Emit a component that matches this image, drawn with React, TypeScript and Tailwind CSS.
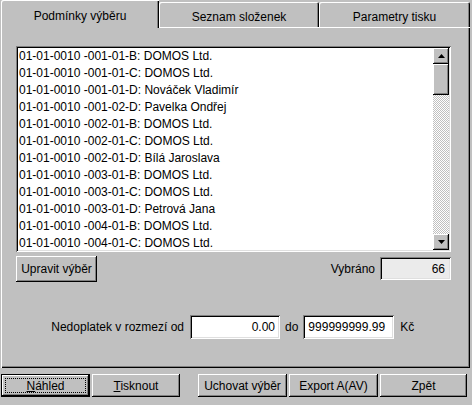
import React from "react";

const rows = [
  "01-01-0010 -001-01-B: DOMOS Ltd.",
  "01-01-0010 -001-01-C: DOMOS Ltd.",
  "01-01-0010 -001-01-D: Nováček Vladimír",
  "01-01-0010 -001-02-D: Pavelka Ondřej",
  "01-01-0010 -002-01-B: DOMOS Ltd.",
  "01-01-0010 -002-01-C: DOMOS Ltd.",
  "01-01-0010 -002-01-D: Bílá Jaroslava",
  "01-01-0010 -003-01-B: DOMOS Ltd.",
  "01-01-0010 -003-01-C: DOMOS Ltd.",
  "01-01-0010 -003-01-D: Petrová Jana",
  "01-01-0010 -004-01-B: DOMOS Ltd.",
  "01-01-0010 -004-01-C: DOMOS Ltd.",
];

// classic 3D edges
const raised = "bg-[#c0c0c0] shadow-[inset_-1px_-1px_#000,inset_1px_1px_#fff,inset_-2px_-2px_#808080]";
const sunken = "shadow-[inset_1px_1px_#808080,inset_-1px_-1px_#fff,inset_2px_2px_#000,inset_-2px_-2px_#dfdfdf]";

const Arrow = ({ down }: { down?: boolean }) => (
  <svg width="7" height="4" viewBox="0 0 7 4">
    <polygon points={down ? "0,0 7,0 3.5,4" : "3.5,0 7,4 0,4"} fill="#000" />
  </svg>
);

const Btn = ({ children, w, def }: { children: React.ReactNode; w: string; def?: boolean }) => (
  <div className={`${w} h-[23px] ${def ? "border border-black" : ""} ${raised} flex items-stretch justify-center`}>
    {def ? (
      <div className="flex-1 m-[3px] border border-dotted border-black flex items-center justify-center">{children}</div>
    ) : (
      <div className="flex items-center">{children}</div>
    )}
  </div>
);

export default function App() {
  return (
    <div className="w-[472px] h-[405px] bg-[#c0c0c0] text-black text-[12px] font-['Liberation_Sans',Arial,sans-serif] overflow-hidden">
      <div className="ml-px w-[469px]">
        {/* tabs */}
        <div className="flex items-end h-[27px]">
          <div className="relative z-10 w-[158px] h-[28px] -mb-px bg-[#c0c0c0] rounded-tl-[2px] shadow-[inset_1px_1px_#fff,inset_-1px_0_#000,inset_-2px_0_#808080] flex justify-center pt-[7px]">
            Podmínky výběru
          </div>
          <div className="w-[160px] h-[25px] rounded-t-[2px] shadow-[inset_1px_1px_#fff,inset_-1px_0_#000,inset_-2px_0_#808080] flex justify-center pt-[6px]">
            Seznam složenek
          </div>
          <div className="w-[151px] h-[25px] rounded-t-[2px] shadow-[inset_1px_1px_#fff,inset_-1px_0_#000,inset_-2px_0_#808080] flex justify-center pt-[6px]">
            Parametry tisku
          </div>
        </div>

        {/* panel */}
        <div className="h-[341px] shadow-[inset_1px_1px_#fff,inset_-1px_-1px_#000,inset_-2px_-2px_#808080] pt-[19px] pl-[15px]">
          {/* list */}
          <div className={`w-[435px] h-[206px] bg-white ${sunken} p-[2px] flex`}>
            <div className="flex-1 overflow-hidden pl-px">
              {rows.map((r) => (
                <div key={r} className="h-[17px] leading-[17px] whitespace-nowrap">
                  {r}
                </div>
              ))}
            </div>
            <div className="w-[16px] flex flex-col">
              <div className={`h-[16px] ${raised} flex items-center justify-center`}>
                <Arrow />
              </div>
              <div className={`h-[31px] ${raised}`} />
              <div className="flex-1 bg-[repeating-conic-gradient(#ffffff_0%_25%,#c0c0c0_0%_50%)] bg-[length:2px_2px]" />
              <div className={`h-[16px] ${raised} flex items-center justify-center`}>
                <Arrow down />
              </div>
            </div>
          </div>

          {/* edit selection + count */}
          <div className="w-[435px] mt-[4px] flex items-start">
            <div className={`w-[81px] h-[26px] ${raised} flex items-center justify-center`}>Upravit výběr</div>
            <div className="flex-1" />
            <div className="flex items-center mt-px">
              <span className="mr-[5px]">Vybráno</span>
              <div className={`w-[71px] h-[23px] bg-[#ebebeb] ${sunken} flex items-center justify-end pr-[6px]`}>66</div>
            </div>
          </div>

          {/* range */}
          <div className="mt-[33px] flex items-center h-[24px]">
            <span className="w-[168px] text-right mr-[6px]">Nedoplatek v rozmezí od</span>
            <div className={`w-[90px] h-[24px] bg-white ${sunken} flex items-center justify-end pr-[5px]`}>0.00</div>
            <span className="mx-[5px]">do</span>
            <div className={`w-[91px] h-[24px] bg-white ${sunken} flex items-center pl-[5px]`}>999999999.99</div>
            <span className="ml-[6px]">Kč</span>
          </div>
        </div>

        {/* buttons */}
        <div className="mt-[6px] flex">
          <Btn w="w-[89px]" def>
            <span>
              <span className="underline">N</span>áhled
            </span>
          </Btn>
          <div className="w-[2px]" />
          <Btn w="w-[88px]">
            <span>
              <span className="underline">T</span>isknout
            </span>
          </Btn>
          <div className="w-[18px]" />
          <Btn w="w-[89px]">Uchovat výběr</Btn>
          <div className="w-[2px]" />
          <Btn w="w-[89px]">Export A(AV)</Btn>
          <div className="w-[2px]" />
          <Btn w="w-[87px]">Zpět</Btn>
        </div>
      </div>
    </div>
  );
}
